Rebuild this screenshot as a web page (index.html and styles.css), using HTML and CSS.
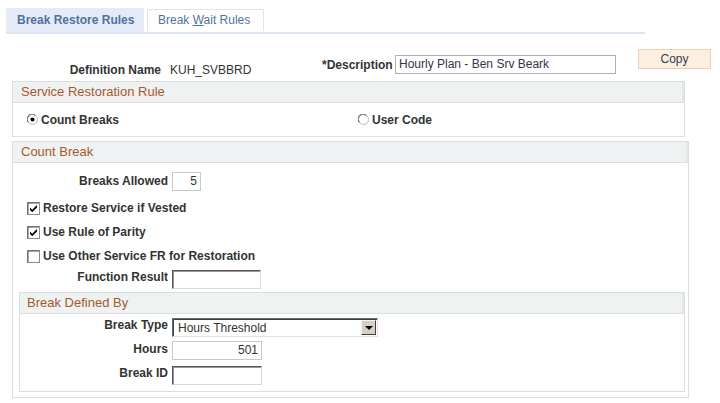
FILE: index.html
```html
<!DOCTYPE html>
<html>
<head>
<meta charset="utf-8">
<link rel="stylesheet" href="styles.css">
</head>
<body>
<div class="tabs">
  <div class="tab tab-active">Break Restore Rules</div>
  <div class="tab tab-idle">Break <u>W</u>ait Rules</div>
</div>

<div class="toprow">
  <div class="defgroup">
    <span class="deflabel">Definition Name</span>
    <span class="defvalue">KUH_SVBBRD</span>
  </div>
  <div class="descgroup">
    <span class="desclabel">*Description</span>
    <div class="field field-desc">Hourly Plan - Ben Srv Beark</div>
  </div>
  <div class="copybtn">Copy</div>
</div>

<section class="group group-service">
  <div class="group-head">Service Restoration Rule</div>
  <div class="radio-row">
    <div class="radio-item radio-first">
      <svg class="radio" width="11" height="11" viewBox="0 0 11 11">
        <circle cx="5.5" cy="5.5" r="5" fill="#fff" stroke="#b8b8b8"/>
        <path d="M1.6 8.2 A4.3 4.3 0 0 1 8.2 1.6" fill="none" stroke="#707070" stroke-width="1.1"/>
        <circle cx="5.5" cy="5.5" r="2" fill="#000"/>
      </svg>
      <span class="radio-text">Count Breaks</span>
    </div>
    <div class="radio-item">
      <svg class="radio" width="11" height="11" viewBox="0 0 11 11">
        <circle cx="5.5" cy="5.5" r="5" fill="#fff" stroke="#b8b8b8"/>
        <path d="M1.6 8.2 A4.3 4.3 0 0 1 8.2 1.6" fill="none" stroke="#707070" stroke-width="1.1"/>
      </svg>
      <span class="radio-text">User Code</span>
    </div>
  </div>
</section>

<section class="group group-count">
  <div class="group-head">Count Break</div>
  <div class="count-body">
    <div class="frow frow-breaks">
      <span class="flabel flabel-count flabel-off2">Breaks Allowed</span>
      <div class="field field-light field-num field-w29">5</div>
    </div>

    <div class="checks">
      <div class="check-row">
        <svg class="cbox" width="13" height="13" viewBox="0 0 13 13">
          <rect x="0.5" y="0.5" width="12" height="12" fill="#fff" stroke="#8a8a8a"/>
          <path d="M1 1 H12 M1 1 V12" stroke="#555" stroke-width="1"/>
          <path d="M3 5.5 L5.2 7.8 L10 3 L10 5.4 L5.2 10.2 L3 8 Z" fill="#000"/>
        </svg>
        <span class="check-text">Restore Service if Vested</span>
      </div>
      <div class="check-row">
        <svg class="cbox" width="13" height="13" viewBox="0 0 13 13">
          <rect x="0.5" y="0.5" width="12" height="12" fill="#fff" stroke="#8a8a8a"/>
          <path d="M1 1 H12 M1 1 V12" stroke="#555" stroke-width="1"/>
          <path d="M3 5.5 L5.2 7.8 L10 3 L10 5.4 L5.2 10.2 L3 8 Z" fill="#000"/>
        </svg>
        <span class="check-text">Use Rule of Parity</span>
      </div>
      <div class="check-row">
        <svg class="cbox" width="13" height="13" viewBox="0 0 13 13">
          <rect x="0.5" y="0.5" width="12" height="12" fill="#fff" stroke="#8a8a8a"/>
          <path d="M1 1 H12 M1 1 V12" stroke="#555" stroke-width="1"/>
        </svg>
        <span class="check-text">Use Other Service FR for Restoration</span>
      </div>
    </div>

    <div class="frow frow-func">
      <span class="flabel flabel-count">Function Result</span>
      <div class="field field-inset field-w89"></div>
    </div>

    <section class="group group-sub">
      <div class="group-head group-head-sub">Break Defined By</div>
      <div class="sub-body">
        <div class="frow">
          <span class="flabel flabel-sub">Break Type</span>
          <div class="select">
            <span class="select-text">Hours Threshold</span>
            <span class="select-btn"><span class="select-arrow"></span></span>
          </div>
        </div>
        <div class="frow frow-hours">
          <span class="flabel flabel-sub flabel-off1">Hours</span>
          <div class="field field-light field-num field-w90">501</div>
        </div>
        <div class="frow frow-id">
          <span class="flabel flabel-sub">Break ID</span>
          <div class="field field-inset field-w90"></div>
        </div>
      </div>
    </section>
  </div>
</section>
</body>
</html>
```

FILE: styles.css
```css
* { box-sizing: border-box; }

body {
  margin: 0;
  font-family: "Liberation Sans", Arial, sans-serif;
  font-size: 12px;
  color: #333;
  background: #fff;
}

/* Tabs */
.tabs {
  margin: 8px 0 0 6px;
  width: 639px;
  height: 26px;
  display: flex;
  align-items: flex-end;
  border-bottom: 2px solid #dbe5f1;
}
.tab {
  color: #50729f;
  white-space: nowrap;
}
.tab-active {
  width: 138px;
  height: 24px;
  line-height: 24px;
  padding-left: 11px;
  background: #e4ebf6;
  font-weight: bold;
}
.tab-idle {
  margin-left: 3px;
  margin-bottom: 1px;
  width: 117px;
  height: 22px;
  line-height: 20px;
  padding-left: 10px;
  border: 1px solid #dfe5ec;
  border-bottom: none;
  background: #fff;
}
.tab-idle u { text-decoration-thickness: 1px; }

/* Top row */
.toprow {
  margin-top: 15px;
  height: 32px;
  display: flex;
  align-items: flex-start;
}
.defgroup {
  width: 322px;
  margin-top: 14px;
  display: flex;
  line-height: 14px;
}
.deflabel {
  width: 161px;
  text-align: right;
  font-weight: bold;
}
.defvalue {
  margin-left: 9px;
}
.descgroup {
  width: 316px;
  margin-top: 6px;
  display: flex;
  align-items: center;
}
.desclabel {
  font-weight: bold;
  width: 73px;
}
.field {
  height: 19px;
  line-height: 17px;
  padding: 0 3px;
  background: #fff;
  color: #333;
  white-space: nowrap;
  overflow: hidden;
}
.field-desc {
  width: 221px;
  border: 1px solid #b0b0b0;
  color: #33334d;
}
.copybtn {
  width: 73px;
  height: 20px;
  line-height: 18px;
  text-align: center;
  background: #fbefe2;
  border: 1px solid #f0cfae;
  color: #3a3a55;
}

/* Group boxes */
.group {
  border: 1px solid #dedede;
  background: #fff;
}
.group-service {
  margin-left: 12px;
  width: 673px;
}
.group-count {
  margin-left: 12px;
  margin-top: 4px;
  width: 677px;
}
.group-head {
  height: 21px;
  line-height: 20px;
  padding-left: 8px;
  background: #eef2f3;
  border-bottom: 1px solid #dedede;
  border-right: 2px solid #e4e6e6;
  color: #a9582a;
  font-size: 13px;
}
.group-head-sub {
  padding-left: 7px;
}

/* Radios */
.radio-row {
  height: 33px;
  display: flex;
  align-items: center;
  padding-left: 14px;
  font-weight: bold;
}
.radio-item {
  display: flex;
  align-items: center;
}
.radio-first {
  width: 331px;
}
.radio { display: block; }
.radio-text { margin-left: 3px; }

/* Count break */
.count-body {
  padding: 9px 0 5px 0;
}
.frow {
  display: flex;
  align-items: flex-start;
}
.flabel {
  font-weight: bold;
  text-align: right;
  line-height: 14px;
  white-space: nowrap;
}
.flabel-count {
  width: 155px;
  margin-right: 4px;
}
.flabel-sub {
  width: 148px;
  margin-right: 4px;
}
.flabel-off2 { padding-top: 2px; }
.flabel-off1 { padding-top: 1px; }

.field-light {
  border: 1px solid #c8c8c8;
}
.field-num {
  text-align: right;
}
.field-inset {
  border: 1px solid;
  border-color: #555 #d8d8d8 #d8d8d8 #555;
  box-shadow: inset 1px 1px 0 #9a9a9a;
}
.field-w29 { width: 29px; }
.field-w89 { width: 89px; }
.field-w90 { width: 90px; }

.checks {
  margin-top: 5px;
  padding-left: 14px;
  font-weight: bold;
}
.check-row {
  height: 24px;
  display: flex;
  align-items: center;
}
.cbox { display: block; }
.check-text { margin-left: 3px; }

.frow-func { margin-top: 2px; }

/* Sub group */
.group-sub {
  margin: 3px 0 0 6px;
  width: 666px;
}
.sub-body {
  padding: 4px 0 6px 0;
}
.frow-hours { margin-top: 4px; }
.frow-id { margin-top: 6px; }

.select {
  width: 206px;
  height: 19px;
  display: flex;
  align-items: stretch;
  border: 1px solid;
  border-color: #6a6a6a #e0e0e0 #e0e0e0 #6a6a6a;
  box-shadow: inset 1px 1px 0 #404040;
  background: #fff;
  padding: 1px 1px 0 1px;
}
.select-text {
  flex: 1;
  line-height: 16px;
  padding-left: 4px;
  color: #333;
}
.select-btn {
  width: 15px;
  margin-bottom: 1px;
  background: #d4d0c8;
  border: 1px solid;
  border-color: #f4f4f4 #404040 #404040 #f4f4f4;
  display: flex;
  align-items: center;
  justify-content: center;
}
.select-arrow {
  width: 0;
  height: 0;
  border-left: 4px solid transparent;
  border-right: 4px solid transparent;
  border-top: 4px solid #000;
  margin-top: 1px;
}
```
